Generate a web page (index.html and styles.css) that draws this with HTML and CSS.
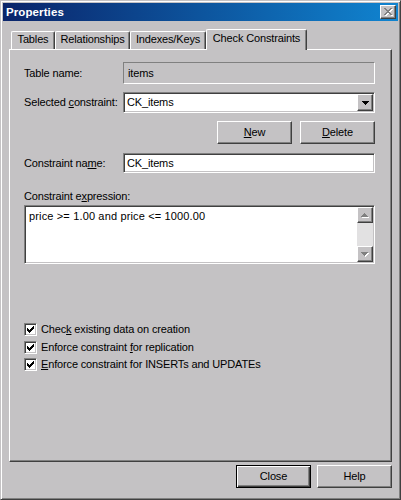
FILE: index.html
```html
<!DOCTYPE html>
<html>
<head>
<meta charset="utf-8">
<title>Properties</title>
<link rel="stylesheet" href="styles.css">
</head>
<body>
<div class="window">
  <div class="titlebar">
    <span class="title">Properties</span>
    <span class="tb-close">
      <svg width="9" height="8" viewBox="0 0 9 8" shape-rendering="crispEdges">
        <path transform="translate(1,1)" fill="#fff" d="M0 0h2v1h-2zM6 0h2v1h-2zM1 1h2v1h-2zM5 1h2v1h-2zM2 2h4v1h-4zM3 3h2v1h-2zM2 4h4v1h-4zM1 5h2v1h-2zM5 5h2v1h-2zM0 6h2v1h-2zM6 6h2v1h-2z"/>
        <path fill="#808080" d="M0 0h2v1h-2zM6 0h2v1h-2zM1 1h2v1h-2zM5 1h2v1h-2zM2 2h4v1h-4zM3 3h2v1h-2zM2 4h4v1h-4zM1 5h2v1h-2zM5 5h2v1h-2zM0 6h2v1h-2zM6 6h2v1h-2z"/>
      </svg>
    </span>
  </div>
  <div class="body">
    <div class="tabs">
      <div class="tab tab-tables">Tables</div>
      <div class="tab tab-rel">Relationships</div>
      <div class="tab tab-idx">Indexes/Keys</div>
      <div class="tab tab-check selected">Check Constraints</div>
    </div>
    <div class="panel">
      <div class="row row-table">
        <span class="lbl">Table name:</span>
        <div class="field static">items</div>
      </div>
      <div class="row row-combo">
        <span class="lbl">Selected <u>c</u>onstraint:</span>
        <div class="combo">
          <span class="combo-text">CK_items</span>
          <span class="sbtn dd">
            <svg width="7" height="4" viewBox="0 0 7 4" shape-rendering="crispEdges"><path fill="#000" d="M0 0h7v1h-7zM1 1h5v1h-5zM2 2h3v1h-3zM3 3h1v1h-1z"/></svg>
          </span>
        </div>
      </div>
      <div class="btnrow">
        <div class="btn"><span><u>N</u>ew</span></div>
        <div class="btn"><span><u>D</u>elete</span></div>
      </div>
      <div class="row row-name">
        <span class="lbl">Constraint na<u>m</u>e:</span>
        <div class="field sunken">CK_items</div>
      </div>
      <div class="lbl-expr">Constraint e<u>x</u>pression:</div>
      <div class="textarea">
        <div class="ta-text">price &gt;= 1.00 and price &lt;= 1000.00</div>
        <div class="vscroll">
          <span class="sbtn">
            <svg width="8" height="5" viewBox="0 0 8 5" shape-rendering="crispEdges">
              <path transform="translate(1,1)" fill="#fff" d="M3 0h1v1h-1zM2 1h3v1h-3zM1 2h5v1h-5zM0 3h7v1h-7z"/>
              <path fill="#808080" d="M3 0h1v1h-1zM2 1h3v1h-3zM1 2h5v1h-5zM0 3h7v1h-7z"/>
            </svg>
          </span>
          <span class="track"></span>
          <span class="sbtn">
            <svg width="8" height="5" viewBox="0 0 8 5" shape-rendering="crispEdges">
              <path transform="translate(1,1)" fill="#fff" d="M0 0h7v1h-7zM1 1h5v1h-5zM2 2h3v1h-3zM3 3h1v1h-1z"/>
              <path fill="#808080" d="M0 0h7v1h-7zM1 1h5v1h-5zM2 2h3v1h-3zM3 3h1v1h-1z"/>
            </svg>
          </span>
        </div>
      </div>
      <div class="checks">
        <div class="check">
          <span class="cbox"><svg width="7" height="7" viewBox="0 0 7 7" shape-rendering="crispEdges"><path fill="#000" d="M0 2h1v3h-1zM1 3h1v3h-1zM2 4h1v3h-1zM3 3h1v3h-1zM4 2h1v3h-1zM5 1h1v3h-1zM6 0h1v3h-1z"/></svg></span>
          <span>Chec<u>k</u> existing data on creation</span>
        </div>
        <div class="check">
          <span class="cbox"><svg width="7" height="7" viewBox="0 0 7 7" shape-rendering="crispEdges"><path fill="#000" d="M0 2h1v3h-1zM1 3h1v3h-1zM2 4h1v3h-1zM3 3h1v3h-1zM4 2h1v3h-1zM5 1h1v3h-1zM6 0h1v3h-1z"/></svg></span>
          <span>Enforce constraint <u>f</u>or replication</span>
        </div>
        <div class="check">
          <span class="cbox"><svg width="7" height="7" viewBox="0 0 7 7" shape-rendering="crispEdges"><path fill="#000" d="M0 2h1v3h-1zM1 3h1v3h-1zM2 4h1v3h-1zM3 3h1v3h-1zM4 2h1v3h-1zM5 1h1v3h-1zM6 0h1v3h-1z"/></svg></span>
          <span><u>E</u>nforce constraint for INSERTs and UPDATEs</span>
        </div>
      </div>
    </div>
    <div class="footer">
      <div class="btn default"><span>Close</span></div>
      <div class="btn"><span>Help</span></div>
    </div>
  </div>
</div>
</body>
</html>
```

FILE: styles.css
```css
:root {
  --face: #c4c2c4;
  --shadow: #808080;
  --dark: #404040;
}

* {
  box-sizing: border-box;
}

html,
body {
  margin: 0;
  padding: 0;
  background: var(--face);
}

body {
  font-family: "Liberation Sans", Arial, sans-serif;
  font-size: 11px;
  line-height: 13px;
  letter-spacing: -0.15px;
  color: #000;
}

u {
  text-decoration: underline;
  text-underline-offset: 1px;
}

.window {
  width: 401px;
  height: 500px;
  background: var(--face);
  border: 1px solid;
  border-color: var(--face) var(--dark) var(--dark) var(--face);
  box-shadow: inset 1px 1px #fff, inset -1px -1px var(--shadow);
  padding: 2px;
  display: flex;
  flex-direction: column;
}

/* title bar */
.titlebar {
  height: 18px;
  flex: none;
  display: flex;
  align-items: center;
  padding: 0 2px 0 3px;
  background: linear-gradient(to right, #0a246a, #1084d0);
}

.title {
  color: #fff;
  font-weight: bold;
  font-size: 11.5px;
  letter-spacing: 0.1px;
}

.tb-close {
  margin-left: auto;
  width: 16px;
  height: 14px;
  background: var(--face);
  border: 1px solid;
  border-color: #fff var(--dark) var(--dark) #fff;
  box-shadow: inset -1px -1px var(--shadow);
  display: flex;
  align-items: center;
  justify-content: center;
  padding: 0 0 1px 1px;
}

.tb-close svg {
  display: block;
}

/* body */
.body {
  flex: 1;
  display: flex;
  flex-direction: column;
  padding: 8px 6px 0 6px;
}

.tabs {
  height: 20px;
  flex: none;
  display: flex;
  align-items: flex-end;
  padding-left: 2px;
  position: relative;
  z-index: 1;
}

.tab {
  height: 18px;
  border: 1px solid #fff;
  border-bottom: none;
  border-right-color: var(--dark);
  border-radius: 2px 2px 0 0;
  box-shadow: inset -1px 0 var(--shadow);
  background: var(--face);
  text-align: center;
  padding-top: 1px;
  white-space: nowrap;
}

.tab-tables { width: 44px; }
.tab-rel { width: 75px; }
.tab-idx { width: 76px; }
.tab-check { width: 101px; }

.tab.selected {
  height: 21px;
  margin-bottom: -1px;
  padding-top: 2px;
}

.panel {
  height: 413px;
  flex: none;
  border: 1px solid;
  border-color: #fff var(--dark) var(--dark) #fff;
  box-shadow: inset -1px -1px var(--shadow);
  padding: 12px 16px 0 14px;
  display: flex;
  flex-direction: column;
}

.row {
  display: flex;
  align-items: center;
}

.row-table { height: 22px; }
.row-combo { height: 21px; margin-top: 8px; }
.row-name { height: 20px; margin-top: 9px; }

.lbl {
  width: 99px;
  flex: none;
  white-space: nowrap;
}

.field {
  flex: 1;
  height: 100%;
  display: flex;
  align-items: center;
  white-space: nowrap;
}

.field.static {
  border: 1px solid;
  border-color: var(--shadow) #fff #fff var(--shadow);
  padding-left: 4px;
}

.field.sunken,
.combo,
.textarea {
  background: #fff;
  border: 1px solid;
  border-color: var(--shadow) #fff #fff var(--shadow);
  box-shadow: inset 1px 1px var(--dark), inset -1px -1px var(--face);
}

.field.sunken {
  padding-left: 3px;
}

.combo {
  flex: 1;
  height: 100%;
  display: flex;
  align-items: stretch;
  padding: 1px;
}

.combo-text {
  flex: 1;
  display: flex;
  align-items: center;
  padding-left: 2px;
}

.sbtn {
  width: 16px;
  flex: none;
  background: var(--face);
  border: 1px solid;
  border-color: #fff var(--dark) var(--dark) #fff;
  box-shadow: inset -1px -1px var(--shadow);
  display: flex;
  align-items: center;
  justify-content: center;
}

.sbtn svg {
  display: block;
}

.btnrow {
  height: 23px;
  margin-top: 8px;
  display: flex;
  justify-content: flex-end;
  gap: 8px;
}

.btn {
  width: 75px;
  height: 23px;
  background: var(--face);
  border: 1px solid;
  border-color: #fff var(--dark) var(--dark) #fff;
  box-shadow: inset -1px -1px var(--shadow);
  display: flex;
  align-items: center;
  justify-content: center;
  white-space: nowrap;
}

.btn.default {
  border-color: #000;
  box-shadow: inset 1px 1px #fff, inset -1px -1px var(--dark), inset -2px -2px var(--shadow);
}

.lbl-expr {
  margin-top: 17px;
  height: 13px;
}

.textarea {
  margin-top: 2px;
  height: 59px;
  padding: 1px;
  display: flex;
}

.ta-text {
  flex: 1;
  padding: 3px 0 0 3px;
  white-space: nowrap;
  letter-spacing: 0.15px;
}

.vscroll {
  width: 16px;
  flex: none;
  display: flex;
  flex-direction: column;
}

.vscroll .sbtn {
  height: 16px;
}

.track {
  flex: 1;
  background: #e2e1e2;
}

.checks {
  margin-top: 57px;
  display: flex;
  flex-direction: column;
}

.check {
  height: 17px;
  display: flex;
  align-items: center;
  gap: 4px;
  white-space: nowrap;
}

.check:first-child {
  height: 18px;
  padding-bottom: 1px;
}

.cbox {
  width: 13px;
  height: 13px;
  flex: none;
  background: #fff;
  border: 1px solid;
  border-color: var(--shadow) #fff #fff var(--shadow);
  box-shadow: inset 1px 1px var(--dark), inset -1px -1px var(--face);
  display: flex;
  align-items: center;
  justify-content: center;
}

.cbox svg {
  display: block;
}

.footer {
  margin-top: 3px;
  display: flex;
  justify-content: flex-end;
  gap: 6px;
}
```
